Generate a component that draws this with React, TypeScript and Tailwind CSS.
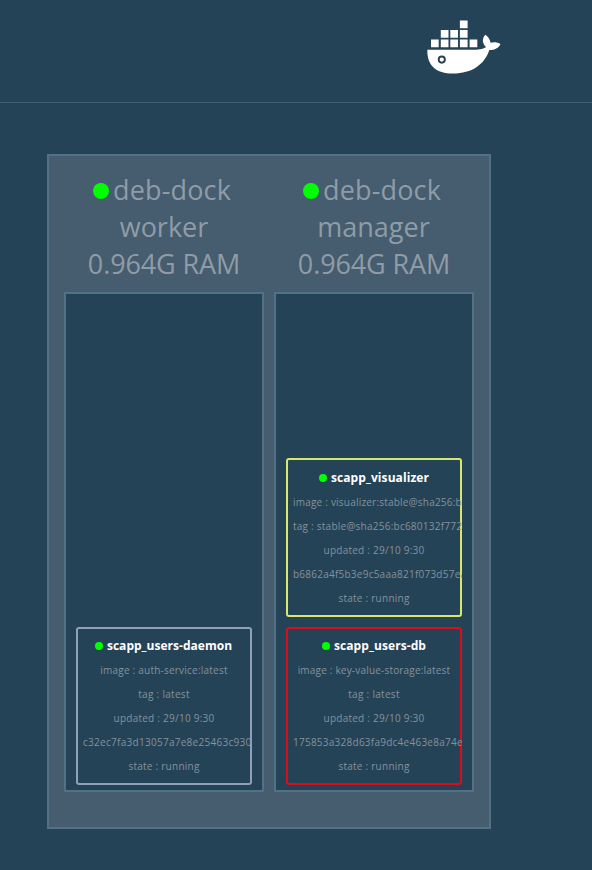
interface Task {
  name: string;
  frame: string;
  nameTracking: string;
  lines: { text: string; tracking: string }[];
}

interface SwarmNode {
  role: string;
  roleOffset: string;
  tasks: Task[];
}

const nodes: SwarmNode[] = [
  {
    role: 'worker',
    roleOffset: '',
    tasks: [
      {
        name: 'scapp_users-daemon',
        frame: 'border-[#909fba] h-[158px] pt-[5px]',
        nameTracking: 'pr-px tracking-[0.02px]',
        lines: [
          { text: 'image : auth-service:latest', tracking: 'tracking-[0.22px]' },
          { text: 'tag : latest', tracking: 'tracking-[0.3px]' },
          { text: 'updated : 29/10 9:30', tracking: 'tracking-[0.25px]' },
          { text: 'c32ec7fa3d13057a7e8e25463c930', tracking: 'tracking-[0.28px]' },
          { text: 'state : running', tracking: 'tracking-[0.25px]' },
        ],
      },
    ],
  },
  {
    role: 'manager',
    roleOffset: 'pr-px',
    tasks: [
      {
        name: 'scapp_visualizer',
        frame: 'border-[#d9e76c] h-[159px] pt-[6px]',
        nameTracking: 'tracking-[0.08px]',
        lines: [
          { text: 'image : visualizer:stable@sha256:b', tracking: 'tracking-[0.21px]' },
          { text: 'tag : stable@sha256:bc680132f772', tracking: 'tracking-[0.24px]' },
          { text: 'updated : 29/10 9:30', tracking: 'tracking-[0.25px]' },
          { text: 'b6862a4f5b3e9c5aaa821f073d57ea', tracking: 'tracking-[0.24px]' },
          { text: 'state : running', tracking: 'tracking-[0.25px]' },
        ],
      },
      {
        name: 'scapp_users-db',
        frame: 'border-[#dc0d1b] h-[158px] pt-[5px]',
        nameTracking: 'tracking-[0.08px]',
        lines: [
          { text: 'image : key-value-storage:latest', tracking: 'tracking-[0.19px]' },
          { text: 'tag : latest', tracking: 'tracking-[0.3px]' },
          { text: 'updated : 29/10 9:30', tracking: 'tracking-[0.25px]' },
          { text: '175853a328d63fa9dc4e463e8a74e', tracking: 'tracking-[0.25px]' },
          { text: 'state : running', tracking: 'tracking-[0.25px]' },
        ],
      },
    ],
  },
];

function Whale() {
  return (
    <svg className="h-[56px] w-[76px]" viewBox="0 0 76 56" fill="#fff">
      <path d="M34.9 1.5h7.7v7.7h-7.7zM15.8 11h7.7v7.7h-7.7zM25.3 11H33v7.7h-7.7zM34.9 11h7.7v7.7h-7.7zM6 20.5h7.7v7.7H6zM15.8 20.5h7.7v7.7h-7.7zM25.3 20.5H33v7.7h-7.7zM34.9 20.5h7.7v7.7h-7.7zM44.6 20.5h7.7v7.7h-7.7z" />
      <path d="M2.3 30.7H49C55 30.7 59.6 29.5 61 28C57 24.5 57 19.5 60.2 15.8C63.3 17.8 65 20.2 65.5 23.7C68.8 22.7 72.5 23 75.5 25C73.5 29 70 31 64.3 31C59.5 45.5 47 54.5 28 54.5C11 54.5 2 46.5 2.3 30.7Z" />
      <circle cx="16.8" cy="40.6" r="3.1" fill="#fff" stroke="#254356" strokeWidth="1.9" />
    </svg>
  );
}

function TaskCard({ task }: { task: Task }) {
  return (
    <article className={`w-[176px] rounded-[3px] border-2 px-[5px] text-center ${task.frame}`}>
      <h2 className={`flex h-[24px] items-center justify-center gap-1 text-[12px] font-bold text-white ${task.nameTracking}`}>
        <span className="size-2 rounded-full bg-[#00ff00]" />
        {task.name}
      </h2>
      {task.lines.map((line) => (
        <p key={line.text} className={`relative w-[169px] overflow-hidden whitespace-nowrap pr-[7px] text-[10px] leading-[24px] text-[#84929d] ${line.tracking}`}>
          {line.text}
        </p>
      ))}
    </article>
  );
}

export default function App() {
  return (
    <div className="h-[870px] w-[592px] overflow-hidden bg-[#254356] font-['Open_Sans','Noto_Sans',sans-serif]">
      <header className="flex h-[103px] justify-end border-b border-[#435d70] pr-[91px] pt-[19px]">
        <Whale />
      </header>
      <main className="ml-[47px] mt-[51px] flex h-[675px] w-[444px] gap-[10px] border-2 border-[#527086] bg-[#455d6e] px-[15px] pt-[15px]">
        {nodes.map((node) => (
          <section key={node.role} className="w-[200px]">
            <div className="h-[121px] text-center text-[27px] leading-[37px] text-[#8f9ca8]">
              <div className="flex items-center justify-center gap-1 pr-[4px] tracking-[0.15px]">
                <span className="mt-[3px] size-4 rounded-full bg-[#00ff00]" />
                deb-dock
              </div>
              <div className={node.roleOffset}>{node.role}</div>
              <div className="tracking-[-0.12px]">0.964G RAM</div>
            </div>
            <div className="flex h-[500px] flex-col items-center justify-end gap-[10px] border-2 border-[#527086] bg-[#254356] pb-[5px]">
              {node.tasks.map((task) => (
                <TaskCard key={task.name} task={task} />
              ))}
            </div>
          </section>
        ))}
      </main>
    </div>
  );
}
